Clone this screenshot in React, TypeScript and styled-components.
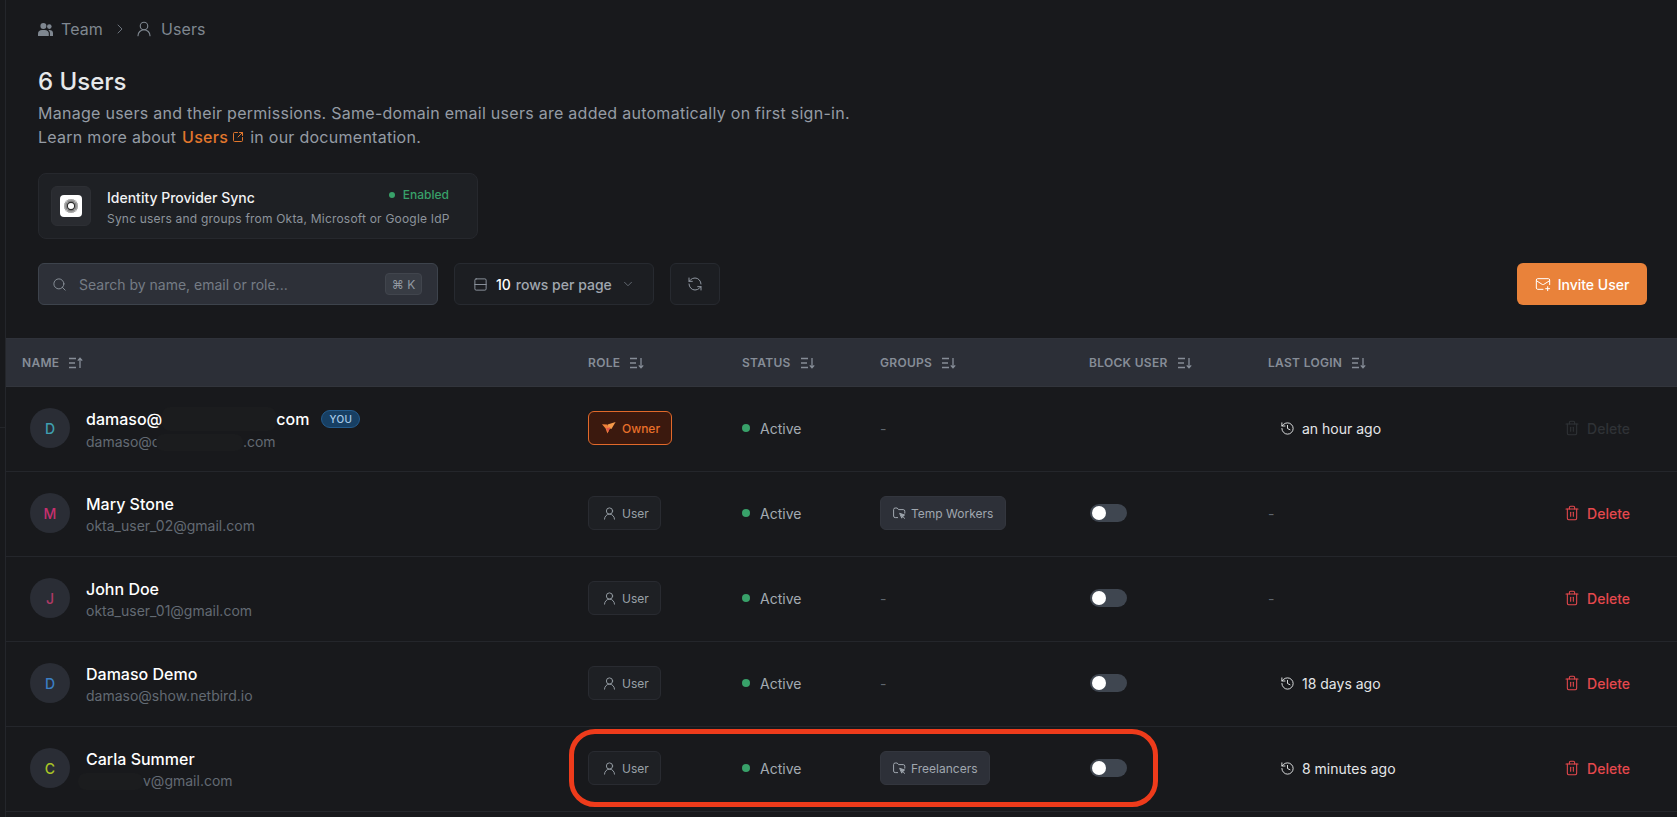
import React from "react";
import styled, { createGlobalStyle } from "styled-components";
import {
  ChevronRight,
  ChevronDown,
  UserRound,
  Search,
  Rows2,
  RefreshCcw,
  MailPlus,
  SquareArrowOutUpRight,
  History,
  Trash2,
} from "lucide-react";

const Global = createGlobalStyle`
  html, body { margin: 0; padding: 0; height: 100%; background: #18191c; overflow: hidden; }
  body { font-family: Inter, "Liberation Sans", sans-serif; -webkit-font-smoothing: antialiased; }
  * { box-sizing: border-box; }
`;

const Shell = styled.div`
  display: flex;
  height: 817px;
  overflow: hidden;
  position: relative;
`;
const SideStrip = styled.div`
  flex: 0 0 6px;
  border-right: 1px solid #24262b;
  padding-top: 427px;
`;
const SideLine = styled.div`
  height: 1px;
  background: #232529;
`;
const Main = styled.main`
  flex: 1;
  min-width: 0;
`;
const Top = styled.div`
  padding: 0 30px 0 32px;
`;
const Crumbs = styled.nav`
  display: flex;
  align-items: center;
  height: 58px;
  color: #7f8790;
  font-size: 16px;
`;
const CrumbText = styled.span<{ $gap?: number }>`
  margin-left: ${(p) => p.$gap ?? 8}px;
  letter-spacing: 0.1px;
`;
const CrumbChevron = styled.span`
  display: flex;
  margin: 0 7px 0 9px;
  color: #6b727b;
`;
const Title = styled.h1`
  margin: 9px 0 0;
  font-size: 24px;
  line-height: 30px;
  font-weight: 500;
  color: #e6e8ea;
`;
const Desc = styled.p`
  margin: 4px 0 0;
  font-size: 16px;
  line-height: 24px;
  letter-spacing: 0.27px;
  color: #959ca5;
`;
const DocLink = styled.a`
  color: #e2772c;
  font-weight: 500;
  display: inline-flex;
  align-items: center;
  gap: 4px;
  margin-right: 6px;
  margin-left: 1px;
`;
const SyncCard = styled.div`
  margin-top: 24px;
  width: 440px;
  height: 66px;
  display: flex;
  align-items: center;
  padding: 0 28px 0 12px;
  background: #1e2024;
  border: 1px solid #26282d;
  border-radius: 8px;
`;
const SyncIconBox = styled.div`
  width: 40px;
  height: 40px;
  flex: none;
  display: flex;
  align-items: center;
  justify-content: center;
  background: #292b30;
  border: 1px solid #2d2f34;
  border-radius: 6px;
`;
const SyncLogo = styled.div`
  width: 22px;
  height: 22px;
  background: #fff;
  border-radius: 4px;
  display: flex;
  align-items: center;
  justify-content: center;
`;
const SyncBody = styled.div`
  margin-left: 16px;
  flex: 1;
  min-width: 0;
`;
const SyncHead = styled.div`
  display: flex;
  justify-content: space-between;
  align-items: flex-start;
`;
const SyncTitle = styled.div`
  font-size: 14px;
  line-height: 20px;
  font-weight: 500;
  color: #f1f2f3;
  margin-top: 3px;
`;
const SyncState = styled.div`
  display: flex;
  align-items: center;
  gap: 8px;
  margin-top: 2px;
  font-size: 12px;
  line-height: 16px;
  font-weight: 500;
  color: #38a169;
`;
const SmallDot = styled.span`
  width: 6px;
  height: 6px;
  border-radius: 50%;
  background: #38a169;
`;
const SyncSub = styled.div`
  margin-top: 3px;
  font-size: 12px;
  line-height: 16px;
  letter-spacing: 0.2px;
  color: #8d949c;
  white-space: nowrap;
`;
const Toolbar = styled.div`
  margin-top: 24px;
  display: flex;
  align-items: center;
  height: 42px;
`;
const SearchBox = styled.div`
  width: 400px;
  height: 42px;
  display: flex;
  align-items: center;
  padding: 0 15px 0 13px;
  background: #2d3038;
  border: 1px solid #3d434c;
  border-radius: 6px;
  color: #8b929b;
`;
const Placeholder = styled.span`
  flex: 1;
  margin-left: 12px;
  font-size: 14px;
  color: #757c85;
`;
const Kbd = styled.span`
  width: 37px;
  height: 22px;
  display: flex;
  align-items: center;
  justify-content: center;
  background: #383c44;
  border: 1px solid #41454d;
  border-radius: 4px;
  font-size: 12px;
  color: #9299a2;
`;
const GhostBtn = styled.div<{ $w: number; $ml: number }>`
  width: ${(p) => p.$w}px;
  margin-left: ${(p) => p.$ml}px;
  height: 42px;
  display: flex;
  align-items: center;
  background: #1c1e22;
  border: 1px solid #272a30;
  border-radius: 6px;
  color: #8f96a0;
  font-size: 14px;
`;
const SelectBtn = styled(GhostBtn)`
  padding: 0 18px;
  font-weight: 500;
`;
const IconBtn = styled(GhostBtn)`
  justify-content: center;
`;
const RowsCount = styled.b`
  margin-left: 8px;
  color: #fff;
  font-weight: 500;
`;
const RowsLabel = styled.span`
  margin-left: 5px;
  color: #a0a7af;
  flex: 1;
  white-space: nowrap;
`;
const InviteBtn = styled.div`
  margin-left: auto;
  width: 130px;
  height: 42px;
  display: flex;
  align-items: center;
  justify-content: center;
  gap: 7px;
  background: #e9823a;
  border-radius: 6px;
  color: #fff;
  font-size: 14px;
  font-weight: 500;
`;

const cols = "582px 154px 138px 209px 179px 200px 1fr";
const HeadRow = styled.div`
  margin-top: 33px;
  display: grid;
  grid-template-columns: ${cols};
  align-items: center;
  height: 49px;
  background: #2c2f37;
  border-bottom: 1px solid #32353c;
  border-top: 1px solid #2f323a;
`;
const HeadCell = styled.div<{ $first?: boolean }>`
  display: flex;
  align-items: center;
  gap: 10px;
  padding-left: ${(p) => (p.$first ? 16 : 0)}px;
  font-size: 12px;
  font-weight: 600;
  letter-spacing: 0.3px;
  text-transform: uppercase;
  color: #868d97;
`;
const Row = styled.div`
  display: grid;
  grid-template-columns: ${cols};
  align-items: center;
  height: 85px;
  padding-bottom: 2px;
  border-bottom: 1px solid #24262b;
`;
const NameCell = styled.div`
  display: flex;
  align-items: center;
  padding-left: 24px;
`;
const Avatar = styled.div<{ $c: string }>`
  width: 40px;
  height: 40px;
  flex: none;
  border-radius: 50%;
  background: #2a2d35;
  display: flex;
  align-items: center;
  justify-content: center;
  font-size: 14px;
  font-weight: 500;
  color: ${(p) => p.$c};
`;
const NameBlock = styled.div`
  margin-left: 16px;
  margin-top: 4px;
`;
const NameLine = styled.div`
  display: flex;
  align-items: center;
  font-size: 16px;
  line-height: 22px;
  font-weight: 500;
  color: #fff;
`;
const Email = styled.div`
  display: flex;
  align-items: center;
  font-size: 14px;
  line-height: 22px;
  color: #636a73;
`;
const Redact = styled.span<{ $w: number; $h: number; $ml?: number }>`
  display: inline-block;
  width: ${(p) => p.$w}px;
  height: ${(p) => p.$h}px;
  margin-left: ${(p) => p.$ml ?? 0}px;
  background: #1b1c1e;
  border-radius: 8px;
  flex: none;
`;
const YouBadge = styled.span`
  margin-left: 12px;
  width: 39px;
  height: 18px;
  display: flex;
  align-items: center;
  justify-content: center;
  border-radius: 9px;
  background: #173f63;
  border: 1px solid #235b8d;
  color: #a9cbe8;
  font-size: 10px;
  font-weight: 500;
  letter-spacing: 0.3px;
`;
const RolePill = styled.div<{ $owner?: boolean }>`
  display: inline-flex;
  align-items: center;
  justify-self: start;
  gap: ${(p) => (p.$owner ? 6 : 5)}px;
  height: 34px;
  padding: 0 11px 0 13px;
  border-radius: 6px;
  font-size: 12px;
  font-weight: ${(p) => (p.$owner ? 500 : 400)};
  background: ${(p) => (p.$owner ? "#3b190e" : "#1e2024")};
  border: 1px solid ${(p) => (p.$owner ? "#e2692a" : "#292b31")};
  color: ${(p) => (p.$owner ? "#e8702a" : "#99a0a8")};
`;
const Status = styled.div`
  display: flex;
  align-items: center;
  gap: 10px;
  font-size: 14px;
  color: #a3aab2;
`;
const Dot = styled.span`
  width: 8px;
  height: 8px;
  border-radius: 50%;
  background: #38a169;
`;
const Dash = styled.div`
  font-size: 14px;
  color: #5f666e;
`;
const GroupPill = styled.div`
  display: inline-flex;
  justify-self: start;
  align-items: center;
  gap: 5px;
  height: 34px;
  padding: 0 12px;
  background: #2d3038;
  border: 1px solid #33363e;
  border-radius: 6px;
  font-size: 12px;
  color: #a0a7af;
`;
const Toggle = styled.div`
  width: 37px;
  height: 18px;
  padding: 2px;
  margin-left: 1px;
  border-radius: 9px;
  background: #3f4650;
`;
const Knob = styled.div`
  width: 14px;
  height: 14px;
  border-radius: 50%;
  background: #fff;
`;
const Login = styled.div`
  display: flex;
  align-items: center;
  gap: 7px;
  padding-left: 12px;
  font-size: 14px;
  color: #e4e6e8;
`;
const DeleteCell = styled.div<{ $off?: boolean }>`
  display: flex;
  align-items: center;
  justify-content: flex-end;
  gap: 7px;
  padding-right: 47px;
  font-size: 14px;
  font-weight: 500;
  color: ${(p) => (p.$off ? "#2f3236" : "#e5484d")};
`;
const Annotation = styled.div`
  position: absolute;
  left: 569px;
  top: 729px;
  width: 589px;
  height: 78px;
  border: 5px solid #ee3b1b;
  border-radius: 26px;
  pointer-events: none;
`;

const SortIcon = ({ up }: { up?: boolean }) => (
  <svg width="14" height="12" viewBox="0 0 14 12" fill="none" stroke="currentColor" strokeWidth="1.3">
    <path d="M0 1.5h7M0 6h6M0 10.5h7" />
    {up ? <path d="M11 11V1.5M8.8 3.6 11 1.2l2.2 2.4" /> : <path d="M11 1v9.5M8.8 8.4l2.2 2.4 2.2-2.4" />}
  </svg>
);

const TeamIcon = () => (
  <svg width="15" height="15" viewBox="0 0 15 15" fill="#7f8790">
    <circle cx="5.4" cy="4" r="3" />
    <path d="M0 14v-2.5C0 9.4 1.8 8 4 8h2.8c2.2 0 4 1.4 4 3.5V14z" />
    <circle cx="11.3" cy="4.6" r="2.3" />
    <path d="M11.9 14v-2.6c0-1.3-.6-2.4-1.6-3.3.4-.1.8-.1 1.2-.1 2 0 3.5 1.2 3.5 3V14z" />
  </svg>
);

const GroupIcon = () => (
  <svg width="13" height="13" viewBox="0 0 13 13" fill="none" stroke="currentColor" strokeWidth="1" strokeLinecap="round">
    <path d="M4.6 10.6H2.2A1.6 1.6 0 0 1 .6 9V2.6A1.6 1.6 0 0 1 2.2 1h2l1.3 1.6h4.7A1.6 1.6 0 0 1 11.8 4.2v2" />
    <path d="M7 6.4 11.6 8l-1.9.8-.8 2z" fill="currentColor" strokeLinejoin="round" />
    <path d="M9.8 9.2 11.4 11.4" />
  </svg>
);

const OktaMark = () => {
  const rays = Array.from({ length: 36 }, (_, i) => (i * 360) / 36);
  return (
    <svg width="16" height="16" viewBox="0 0 16 16">
      {rays.map((a) => (
        <line key={a} x1="8" y1="1" x2="8" y2="4.6" stroke="#333" strokeWidth="0.55" transform={`rotate(${a} 8 8)`} />
      ))}
      <circle cx="8" cy="8" r="3.6" fill="#fff" stroke="#2b2b2b" strokeWidth="1.1" />
    </svg>
  );
};

const BirdMark = () => (
  <svg width="14" height="12" viewBox="0 0 14 12">
    <path d="M0 2.2 5 2.4 8 6 5.4 11.6 3.6 6.4z" fill="#f0803a" />
    <path d="M5.6 2.4 13.6 0 9.4 7 6.6 6z" fill="#f59a4a" />
    <path d="M4 6.4 8.2 5.2 6.4 10z" fill="#e0534a" />
  </svg>
);

type U = {
  letter: string;
  color: string;
  name: React.ReactNode;
  email: React.ReactNode;
  owner?: boolean;
  group?: string;
  login?: string;
};

const users: U[] = [
  {
    letter: "D",
    color: "#3f9fb0",
    owner: true,
    login: "an hour ago",
    name: (
      <>
        damaso@
        <Redact $w={114} $h={24} />
        com
        <YouBadge>YOU</YouBadge>
      </>
    ),
    email: (
      <>
        damaso@c
        <Redact $w={87} $h={17} $ml={-4} />
        .com
      </>
    ),
  },
  { letter: "M", color: "#c7306f", name: "Mary Stone", email: "okta_user_02@gmail.com", group: "Temp Workers" },
  { letter: "J", color: "#b03a66", name: "John Doe", email: "okta_user_01@gmail.com" },
  { letter: "D", color: "#3b7fc4", name: "Damaso Demo", email: "damaso@show.netbird.io", login: "18 days ago" },
  {
    letter: "C",
    color: "#a8c426",
    name: "Carla Summer",
    group: "Freelancers",
    login: "8 minutes ago",
    email: (
      <>
        <Redact $w={65} $h={17} $ml={-8} />
        v@gmail.com
      </>
    ),
  },
];

const headers = ["Role", "Status", "Groups", "Block User", "Last Login"];

export default function App() {
  return (
    <Shell>
      <Global />
      <SideStrip>
        <SideLine />
      </SideStrip>
      <Main>
        <Top>
          <Crumbs>
            <TeamIcon />
            <CrumbText>Team</CrumbText>
            <CrumbChevron>
              <ChevronRight size={16} strokeWidth={1.5} />
            </CrumbChevron>
            <UserRound size={18} strokeWidth={1.5} />
            <CrumbText $gap={8}>Users</CrumbText>
          </Crumbs>
          <Title>6 Users</Title>
          <Desc>
            Manage users and their permissions. Same-domain email users are added automatically on first sign-in.
            <br />
            Learn more about{" "}
            <DocLink>
              Users
              <SquareArrowOutUpRight size={12} strokeWidth={2} />
            </DocLink>
            in our documentation.
          </Desc>
          <SyncCard>
            <SyncIconBox>
              <SyncLogo>
                <OktaMark />
              </SyncLogo>
            </SyncIconBox>
            <SyncBody>
              <SyncHead>
                <SyncTitle>Identity Provider Sync</SyncTitle>
                <SyncState>
                  <SmallDot />
                  Enabled
                </SyncState>
              </SyncHead>
              <SyncSub>Sync users and groups from Okta, Microsoft or Google IdP</SyncSub>
            </SyncBody>
          </SyncCard>
          <Toolbar>
            <SearchBox>
              <Search size={15} strokeWidth={1.5} />
              <Placeholder>Search by name, email or role...</Placeholder>
              <Kbd>⌘ K</Kbd>
            </SearchBox>
            <SelectBtn $w={200} $ml={16}>
              <Rows2 size={15} strokeWidth={1.5} />
              <RowsCount>10</RowsCount>
              <RowsLabel>rows per page</RowsLabel>
              <ChevronDown size={14} strokeWidth={1.5} color="#6b727b" />
            </SelectBtn>
            <IconBtn $w={50} $ml={16}>
              <RefreshCcw size={16} strokeWidth={1.5} />
            </IconBtn>
            <InviteBtn>
              <MailPlus size={16} strokeWidth={1.5} />
              Invite User
            </InviteBtn>
          </Toolbar>
        </Top>
        <HeadRow>
          <HeadCell $first>
            Name <SortIcon up />
          </HeadCell>
          {headers.map((h) => (
            <HeadCell key={h}>
              {h} <SortIcon />
            </HeadCell>
          ))}
          <div />
        </HeadRow>
        {users.map((u, i) => (
          <Row key={i}>
            <NameCell>
              <Avatar $c={u.color}>{u.letter}</Avatar>
              <NameBlock>
                <NameLine>{u.name}</NameLine>
                <Email>{u.email}</Email>
              </NameBlock>
            </NameCell>
            <RolePill $owner={u.owner}>
              {u.owner ? <BirdMark /> : <UserRound size={15} strokeWidth={1.5} />}
              {u.owner ? "Owner" : "User"}
            </RolePill>
            <Status>
              <Dot />
              Active
            </Status>
            {u.group ? (
              <GroupPill>
                <GroupIcon />
                {u.group}
              </GroupPill>
            ) : (
              <Dash>-</Dash>
            )}
            {u.owner ? (
              <div />
            ) : (
              <Toggle>
                <Knob />
              </Toggle>
            )}
            {u.login ? (
              <Login>
                <History size={15} strokeWidth={1.5} />
                {u.login}
              </Login>
            ) : (
              <Dash>-</Dash>
            )}
            <DeleteCell $off={u.owner}>
              <Trash2 size={16} strokeWidth={1.6} />
              Delete
            </DeleteCell>
          </Row>
        ))}
      </Main>
      <Annotation />
    </Shell>
  );
}
